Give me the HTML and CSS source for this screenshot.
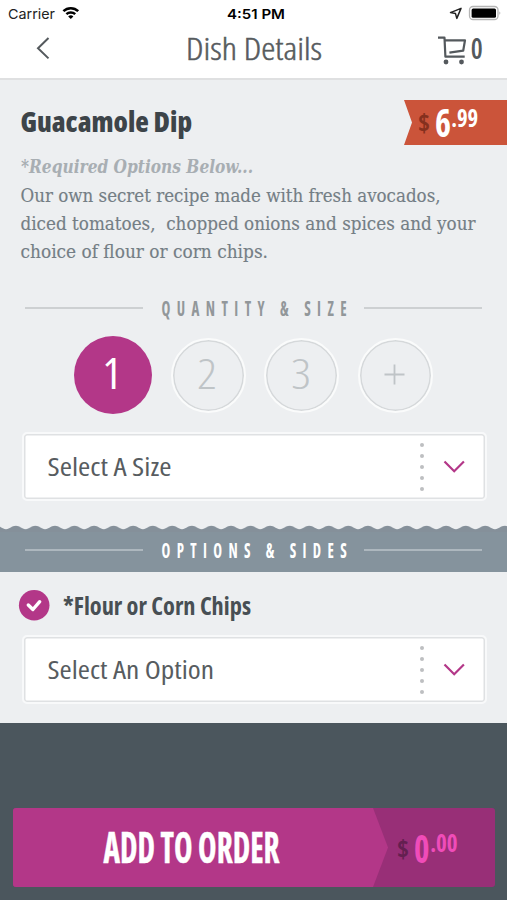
FILE: index.html
```html
<!DOCTYPE html>
<html lang="en">
<head>
<meta charset="utf-8">
<title>Dish Details</title>
<link rel="stylesheet" href="styles.css">
</head>
<body>
<header class="header">
  <div class="status">
    <svg class="status-left" width="90" height="26">
      <text class="carrier" x="8" y="18.5" textLength="47" lengthAdjust="spacingAndGlyphs">Carrier</text>
      <g class="wifi"><path d="M63.4 11.2a10.6 10.6 0 0 1 14.8 0"/><path d="M66.4 14.2a6.4 6.4 0 0 1 8.8 0"/></g>
      <path d="M70.8 19l-2.6-2.6a3.8 3.8 0 0 1 5.2 0z"/>
    </svg>
    <svg width="60" height="26"><text class="clock" x="1" y="18.5" textLength="58" lengthAdjust="spacingAndGlyphs">4:51 PM</text></svg>
    <svg class="status-right" width="60" height="26">
      <path class="locate" d="M3.5 12.6L14 8.4l-4.2 10-1.3-4.8z"/>
      <rect class="battery" x="22.5" y="6.5" width="28.5" height="13" rx="3.5"/>
      <rect x="24.6" y="8.4" width="24.4" height="9.4" rx="1.5"/>
      <path class="battery-tip" d="M52.5 11.2q1.8 1.8 0 3.8z"/>
    </svg>
  </div>
  <nav class="nav">
    <svg class="back" width="14" height="24"><path d="M12.5 2L2 12.2 12.5 22.4"/></svg>
    <svg class="nav-heading" width="136" height="44"><text class="cond nav-title" x="0" y="34" textLength="136" lengthAdjust="spacingAndGlyphs">Dish Details</text></svg>
    <svg class="cart" width="46" height="32">
      <path d="M1 5.7h6.5l.9 19h19.3M8 8.3h20l-1.8 10.4-13.8 2"/>
      <circle cx="9" cy="30" r="2.4"/><circle cx="24.5" cy="30" r="2.4"/>
      <text class="cond cart-count" x="33.8" y="27.2" textLength="12" lengthAdjust="spacingAndGlyphs">0</text>
    </svg>
  </nav>
</header>

<main>
  <section class="dish">
    <div class="dish-head">
      <svg width="174" height="45"><text class="cond dish-name" x="-.5" y="32" textLength="171.5" lengthAdjust="spacingAndGlyphs">Guacamole Dip</text></svg>
      <svg class="price" width="103" height="46">
        <path class="price-bg" d="M0 0H103V45H0L8 22.5z"/>
        <text class="cond price-sign" x="14" y="31.5" textLength="12" lengthAdjust="spacingAndGlyphs">$</text>
        <text class="cond price-main" x="31" y="37" textLength="16" lengthAdjust="spacingAndGlyphs">6</text>
        <text class="cond price-cents" x="47.2" y="26.8" textLength="27" lengthAdjust="spacingAndGlyphs">.99</text>
      </svg>
    </div>
    <svg class="copy" width="460" height="114">
      <text class="required" x="0" y="19.4" textLength="232" lengthAdjust="spacingAndGlyphs">*Required Options Below...</text>
      <text x="-.5" y="47.7" textLength="420" lengthAdjust="spacingAndGlyphs">Our own secret recipe made with fresh avocados,</text>
      <text x="-.5" y="75.7" textLength="455" lengthAdjust="spacingAndGlyphs">diced tomatoes,&nbsp; chopped onions and spices and your</text>
      <text x="-.5" y="103.9" textLength="247.5" lengthAdjust="spacingAndGlyphs">choice of flour or corn chips.</text>
    </svg>
    <div class="divider">
      <i></i>
      <svg width="190" height="24"><text class="cond divider-text" x="2.5" y="20" textLength="191.5" lengthAdjust="spacingAndGlyphs">QUANTITY &amp; SIZE</text></svg>
      <i></i>
    </div>
    <div class="quantities">
      <button class="qty active"><svg width="30" height="44"><text class="cond" x="4.5" y="36" textLength="19" lengthAdjust="spacingAndGlyphs">1</text></svg></button>
      <button class="qty"><svg width="30" height="44"><text class="cond" x="4" y="36" textLength="20" lengthAdjust="spacingAndGlyphs">2</text></svg></button>
      <button class="qty"><svg width="30" height="44"><text class="cond" x="4" y="36" textLength="20" lengthAdjust="spacingAndGlyphs">3</text></svg></button>
      <button class="qty"><svg width="30" height="44"><path d="M14.5 11.5v20M4.5 21.5h20"/></svg></button>
    </div>
    <div class="select">
      <svg width="130" height="40"><text class="cond select-text" x="-.5" y="28.5" textLength="124" lengthAdjust="spacingAndGlyphs">Select A Size</text></svg>
      <span class="dots"><b></b><b></b><b></b><b></b><b></b></span>
      <svg class="chevron" width="22" height="14"><path d="M1.5 1.5L11.2 11.3 20.9 1.5"/></svg>
    </div>
  </section>

  <section class="band">
    <svg class="wave" width="507" height="7">
      <defs><pattern id="scallop" x="6" y="0" width="19.56" height="7" patternUnits="userSpaceOnUse">
        <path d="M0 4.2C4 4.2 5.5 .8 9.8 .8S15.6 4.2 19.56 4.2V7H0z"/>
      </pattern></defs>
      <rect width="507" height="7" fill="url(#scallop)"/>
    </svg>
    <div class="divider">
      <i></i>
      <svg width="190" height="24"><text class="cond divider-text" x="2.5" y="20" textLength="191.5" lengthAdjust="spacingAndGlyphs">OPTIONS &amp; SIDES</text></svg>
      <i></i>
    </div>
  </section>

  <section class="options">
    <div class="option-head">
      <svg width="31" height="31"><circle cx="15.2" cy="15.2" r="15.3"/><path d="M9.3 15l4.6 4.5 6.8-7.8"/></svg>
      <svg width="190" height="34"><text class="cond option-name" x="0" y="26.5" textLength="188" lengthAdjust="spacingAndGlyphs">*Flour or Corn Chips</text></svg>
    </div>
    <div class="select">
      <svg width="170" height="40"><text class="cond select-text" x="-.5" y="28.5" textLength="166.5" lengthAdjust="spacingAndGlyphs">Select An Option</text></svg>
      <span class="dots"><b></b><b></b><b></b><b></b><b></b></span>
      <svg class="chevron" width="22" height="14"><path d="M1.5 1.5L11.2 11.3 20.9 1.5"/></svg>
    </div>
  </section>
</main>

<footer class="footer">
  <button class="order">
    <svg width="482" height="79">
      <path class="order-bg" d="M0 0H360L375 39.5 360 79H0z"/>
      <text class="cond order-text" x="90.5" y="55.3" textLength="176" lengthAdjust="spacingAndGlyphs">ADD TO ORDER</text>
      <text class="cond order-sign" x="384" y="49.5" textLength="12" lengthAdjust="spacingAndGlyphs">$</text>
      <text class="cond order-main" x="401" y="55" textLength="15.5" lengthAdjust="spacingAndGlyphs">0</text>
      <text class="cond order-cents" x="417.2" y="44" textLength="27.5" lengthAdjust="spacingAndGlyphs">.00</text>
    </svg>
  </button>
</footer>
</body>
</html>
```
FILE: styles.css
```css
* { box-sizing: border-box; }
body {
  margin: 0;
  width: 507px;
  height: 900px;
  display: flex;
  flex-direction: column;
  overflow: hidden;
  background: #4b565d;
  font-family: "Open Sans", sans-serif;
}
svg { display: block; flex: none; overflow: visible; }
button { border: 0; padding: 0; background: none; font: inherit; }
.cond { font-family: "Open Sans", sans-serif; font-stretch: 75%; }

.header { height: 80px; background: #fff; border-bottom: 2px solid #dfe0e1; }
.status { display: flex; justify-content: space-between; height: 26px; }
.status-left { margin-right: 48px; }
.status-right { margin-left: 74px; }
.carrier, .clock { font-family: Inter, sans-serif; font-size: 13.4px; fill: #222; }
.clock { font-weight: 600; fill: #000; }
.wifi { fill: none; stroke: #000; stroke-width: 2.5; }
.locate { fill: none; stroke: #222; stroke-width: 1.5; stroke-linejoin: round; }
.battery { fill: #fff; stroke: #b5b5b5; stroke-width: 1.3; }
.battery-tip { fill: #999; }

.nav { display: flex; justify-content: space-between; height: 52px; padding: 0 24px 0 36px; }
.back { margin-top: 10px; fill: none; stroke: #54595d; stroke-width: 2; }
.nav-heading { margin-left: 20px; }
.nav-title { font-size: 32px; fill: #575b5e; font-weight: 300; stroke: #575b5e; stroke-width: .5; }
.cart { margin-top: 6px; }
.cart path { fill: none; stroke: #54595d; stroke-width: 2.2; stroke-linejoin: round; }
.cart circle { fill: #54595d; }
.cart-count { font-size: 28px; font-weight: 600; fill: #54595d; }

.dish { height: 445px; padding-top: 20px; background: #edeff1; }
.dish-head { display: flex; justify-content: space-between; padding-left: 21px; height: 54px; }
.dish-name { font-size: 28px; font-weight: 800; fill: #3d4449; }
.price-bg { fill: #cb543a; }
.price-sign { font-size: 25px; font-weight: 700; fill: #85301e; }
.price-main { font-size: 39px; font-weight: 700; fill: #fff; }
.price-cents { font-size: 24px; font-weight: 700; fill: #fff; }
.copy { margin-left: 21px; font-family: "DejaVu Serif", serif; font-size: 18.4px; font-stretch: condensed; fill: #747e85; stroke: #747e85; stroke-width: .15; }
.required { font-weight: bold; font-style: italic; fill: #a8aeb3; stroke: none; font-size: 18px; }

.divider { display: flex; align-items: center; justify-content: space-between; padding: 0 25px; height: 24px; }
.divider i { width: 118px; height: 2px; background: #cdd0d2; }
.divider-text { font-size: 21px; font-weight: 700; letter-spacing: 9px; fill: #92979a; }
.dish .divider { margin-top: 28px; }

.quantities { display: flex; justify-content: space-between; align-items: center; height: 78px; margin-top: 16px; padding: 0 74px; }
.qty { display: flex; align-items: center; justify-content: center; width: 75px; height: 75px; border-radius: 50%; border: 2.5px solid #fafbfb; box-shadow: inset 0 0 0 1.5px #d5d8da; font-weight: 300; }
.qty text { fill: #bfc4c7; font-size: 43px; }
.qty path { stroke: #bfc4c7; stroke-width: 1.8; }
.qty.active { width: 78px; height: 78px; border: 0; box-shadow: none; background: #b33788; }
.qty.active text { fill: #fff; font-weight: 400; }

.select { display: flex; align-items: center; width: 465px; height: 69px; margin-left: 22px; padding: 0 20px 0 24px; background: #fff; border: 2px solid #f8f9fa; border-radius: 5px; box-shadow: inset 0 0 0 1.5px #dfe1e3; }
.dish .select { margin-top: 18px; }
.select-text { font-size: 24.5px; fill: #575c60; }
.dots { display: flex; flex-direction: column; justify-content: space-between; height: 48px; margin-left: auto; margin-right: 19.5px; }
.dots b { width: 4px; height: 4px; border-radius: 50%; background: #bdbfc1; }
.chevron { fill: none; stroke: #b33788; stroke-width: 2.2; }

.band { height: 47px; background: linear-gradient(#edeff1 7px, #85939d 7px); }
.wave { fill: #85909a; }
.band .divider { margin-top: 6px; }
.band .divider i { background: #adb7be; }
.band .divider-text { fill: #fff; }

.options { height: 151px; padding-top: 16px; background: #edeff1; }
.option-head { display: flex; align-items: center; gap: 13px; height: 34px; padding-left: 19px; }
.option-head circle { fill: #b33788; }
.option-head path { fill: none; stroke: #fff; stroke-width: 3.4; stroke-linecap: round; stroke-linejoin: round; }
.option-name { font-size: 24px; font-weight: 700; fill: #484f54; }
.options .select { margin-top: 13px; }

.footer { padding: 85px 12px 0 13px; }
.order { display: block; width: 482px; height: 79px; border-radius: 3px; overflow: hidden; background: #982f77; }
.order-bg { fill: #b33788; }
.order-text { font-size: 43px; font-weight: 700; fill: #fff; stroke: #fff; stroke-width: .5; }
.order-sign { font-size: 25px; font-weight: 700; fill: #641f50; }
.order-main { font-size: 40px; font-weight: 700; fill: #f04cb9; }
.order-cents { font-size: 24px; font-weight: 700; fill: #f04cb9; }
```
